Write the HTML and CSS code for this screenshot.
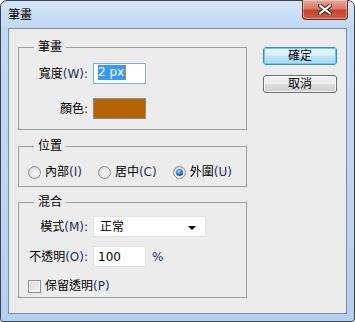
FILE: index.html
```html
<!DOCTYPE html>
<html lang="zh-Hant">
<head>
    <meta charset="UTF-8">
    <title>筆畫</title>
    <link rel="stylesheet" href="styles.css">
</head>
<body>
    <div class="window">
        <div class="titlebar">
            <span class="title">筆畫</span>
            <button class="close" type="button">
                <svg width="14" height="11" viewBox="0 0 14 11">
                    <path d="M2 1.5 L12 9.5 M12 1.5 L2 9.5" stroke="#4a1d16" stroke-width="4.2" stroke-linecap="square"/>
                    <path d="M2 1.5 L12 9.5 M12 1.5 L2 9.5" stroke="#ffffff" stroke-width="2.2" stroke-linecap="square"/>
                </svg>
            </button>
        </div>
        <div class="client">
            <div class="groups">
                <div class="group stroke">
                    <div class="group-title">筆畫</div>
                    <div class="rows">
                        <div class="row">
                            <span class="label">寬度<span class="key">(W):</span></span>
                            <div class="field focused"><span class="sel">2 px</span><span class="caret"></span></div>
                        </div>
                        <div class="row">
                            <span class="label">顏色<span class="key">:</span></span>
                            <div class="swatch"></div>
                        </div>
                    </div>
                </div>

                <div class="group position">
                    <div class="group-title">位置</div>
                    <div class="radios">
                        <span class="option"><span class="radio"></span>內部<span class="key">(I)</span></span>
                        <span class="option"><span class="radio"></span>居中<span class="key">(C)</span></span>
                        <span class="option"><span class="radio checked"></span>外圍<span class="key">(U)</span></span>
                    </div>
                </div>

                <div class="group blend">
                    <div class="group-title">混合</div>
                    <div class="rows">
                        <div class="row">
                            <span class="label">模式<span class="key">(M):</span></span>
                            <div class="select">正常<span class="arrow"></span></div>
                        </div>
                        <div class="row">
                            <span class="label">不透明<span class="key">(O):</span></span>
                            <div class="field">100</div>
                            <span class="unit key">%</span>
                        </div>
                        <div class="check-row">
                            <span class="checkbox"></span>保留透明<span class="key">(P)</span>
                        </div>
                    </div>
                </div>
            </div>

            <div class="buttons">
                <button class="btn default" type="button">確定</button>
                <button class="btn" type="button">取消</button>
            </div>
        </div>
    </div>
</body>
</html>
```

FILE: styles.css
```css
body {
    margin: 0;
    font-family: "DejaVu Sans", "Noto Sans CJK TC", sans-serif;
    font-size: 12px;
    line-height: 16px;
    color: #000;
}

.window {
    width: 355px;
    height: 322px;
    box-sizing: border-box;
    border: 1px solid #3a4552;
    border-radius: 7px 7px 3px 3px;
    background: linear-gradient(to bottom, #d6e6f7 0, #bfd8f3 28px, #bcd6f1 60%, #b4d0ee 100%);
    display: flex;
    flex-direction: column;
}

.titlebar {
    height: 27px;
    display: flex;
    justify-content: space-between;
    align-items: flex-start;
    padding: 0 6px 0 7px;
}

.title {
    margin-top: 6px;
}

.close {
    width: 46px;
    height: 20px;
    margin-top: -1px;
    padding: 0;
    border: 1px solid #6e2b22;
    border-top: none;
    border-radius: 0 0 4px 4px;
    background: linear-gradient(to bottom, #e9a89c 0, #d87a66 45%, #c5442c 55%, #cf6148 100%);
    box-shadow: inset 0 0 0 1px rgba(255, 255, 255, 0.35);
    display: flex;
    justify-content: center;
    align-items: center;
}

.client {
    flex: 1;
    margin: 0 7px 7px;
    border: 1px solid #7d8d9e;
    background: #ececec;
    padding: 18px 9px 0;
    display: flex;
    gap: 16px;
}

.groups {
    width: 229px;
}

.group {
    border: 1px solid #a0a0a0;
}

.position {
    margin-top: 16px;
}

.blend {
    margin-top: 15px;
}

.group-title {
    width: max-content;
    height: 16px;
    margin: -9px 0 0 15px;
    padding: 0 4px;
    background: #ececec;
}

.rows {
    display: flex;
    flex-direction: column;
}

.stroke .rows {
    margin-top: 8px;
    gap: 14px;
    padding-bottom: 10px;
}

.row {
    display: flex;
    align-items: center;
}

.label {
    width: 69px;
    margin-right: 5px;
    text-align: right;
    white-space: nowrap;
}

.key {
    color: #1f2d5c;
}

.field {
    width: 53px;
    height: 21px;
    box-sizing: border-box;
    border: 1px solid #e2e3e4;
    background: #fff;
    padding: 2px 0 0 4px;
    display: flex;
    align-items: flex-start;
}

.field.focused {
    border-color: #7eaee0;
    padding-top: 1px;
}

.sel {
    background: #3399ff;
    color: #fff;
    height: 15px;
    line-height: 15px;
    padding: 0 1px 0 0;
}

.caret {
    width: 1px;
    height: 15px;
    background: #e07a10;
}

.swatch {
    width: 53px;
    height: 21px;
    box-sizing: border-box;
    border: 1px solid #8c8c8c;
    background: #b46400;
}

.radios {
    display: flex;
    gap: 16px;
    margin-top: 10px;
    padding: 0 0 6px 9px;
}

.option {
    display: flex;
    align-items: center;
}

.radio {
    width: 13px;
    height: 13px;
    box-sizing: border-box;
    border: 1px solid #8e8f8f;
    border-radius: 50%;
    background: radial-gradient(circle at 60% 65%, #fbfbfb 0, #e4e4e4 55%, #c9c9c9 100%);
    margin-right: 4px;
    display: flex;
    justify-content: center;
    align-items: center;
}

.radio.checked::after {
    content: '';
    width: 7px;
    height: 7px;
    border-radius: 50%;
    background: radial-gradient(circle at 40% 35%, #a8dcff 0, #2a7bc5 45%, #0f3a6c 100%);
}

.blend .rows {
    margin-top: 6px;
    gap: 9px;
    padding-bottom: 3px;
}

.blend .rows .check-row {
    margin-top: 2px;
}

.select {
    width: 113px;
    height: 21px;
    box-sizing: border-box;
    border: 1px solid #e2e3e4;
    background: #fff;
    padding: 2px 0 0 6px;
    position: relative;
}

.arrow {
    position: absolute;
    right: 9px;
    top: 9px;
    width: 0;
    height: 0;
    border-left: 4px solid transparent;
    border-right: 4px solid transparent;
    border-top: 4px solid #000;
}

.unit {
    margin-left: 6px;
}

.check-row {
    display: flex;
    align-items: center;
    padding-left: 9px;
    height: 16px;
}

.checkbox {
    width: 13px;
    height: 13px;
    box-sizing: border-box;
    border: 1px solid #8e8f8f;
    background: linear-gradient(135deg, #d8d8d8 0, #f7f7f7 100%);
    box-shadow: inset 0 0 0 1px #f4f4f4;
    margin-right: 4px;
}

.buttons {
    display: flex;
    flex-direction: column;
    gap: 10px;
}

.btn {
    width: 74px;
    height: 18px;
    padding: 0;
    border: 1px solid #707070;
    border-radius: 3px;
    background: linear-gradient(to bottom, #f2f2f2 0, #ebebeb 50%, #dddddd 50%, #cfcfcf 100%);
    box-shadow: inset 0 0 0 1px rgba(255, 255, 255, 0.7);
    font: inherit;
    line-height: 14px;
    color: #000;
}

.btn.default {
    border-color: #3c8fd6;
    background: linear-gradient(to bottom, #e9f5fd 0, #d9f0fc 50%, #bee6fd 50%, #a7d9f5 100%);
    box-shadow: inset 0 0 0 1px #5fd0f7;
}
```
